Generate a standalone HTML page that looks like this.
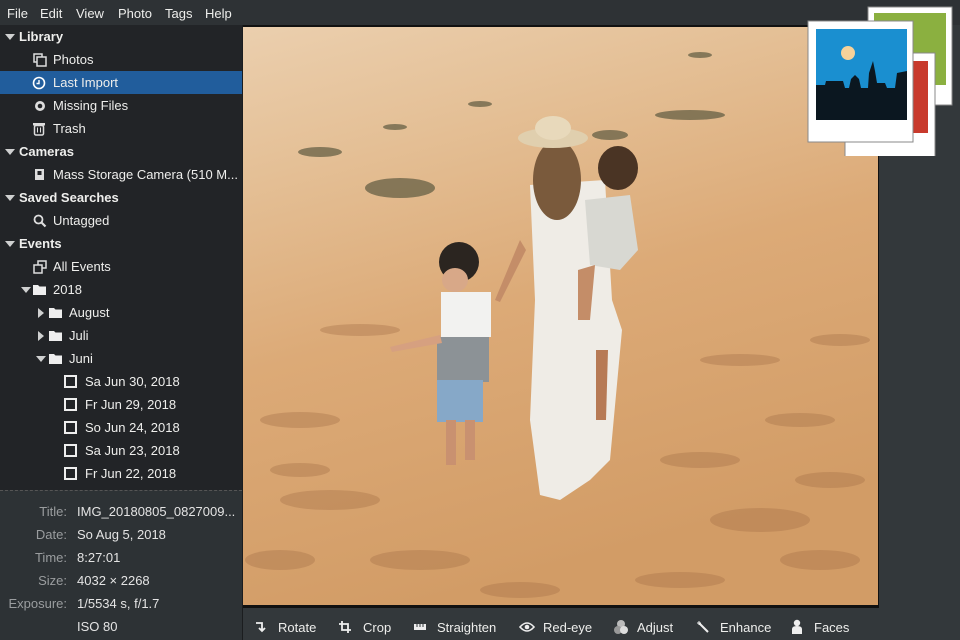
<!DOCTYPE html>
<html><head><meta charset="utf-8">
<style>
*{margin:0;padding:0;box-sizing:border-box}
body{width:960px;height:640px;overflow:hidden;background:#33383b;font-family:"Liberation Sans","DejaVu Sans",sans-serif;font-size:13px;color:#eeeeec;position:relative}
.menu{position:absolute;left:0;top:0;width:960px;height:25px;background:#2e3235;}
.menu span{position:absolute;top:6px;font-size:13px;color:#eeeeec}
.side{position:absolute;left:0;top:25px;width:242px;height:465px;background:#222427;}
.row{position:absolute;left:0;width:242px;height:23px;line-height:24px;white-space:nowrap}
.row.sel{background:#215d9c}
.hdr{font-weight:bold}
.tri{position:absolute;top:9px;width:0;height:0;border-left:5px solid transparent;border-right:5px solid transparent;border-top:6px solid #cfd0d0}
.trir{position:absolute;top:7px;width:0;height:0;border-top:5px solid transparent;border-bottom:5px solid transparent;border-left:6px solid #cfd0d0}
.ic{position:absolute;top:5px}
.info{position:absolute;left:0;top:490px;width:242px;height:150px;background:#2d3235;border-top:1px dashed #555}
.info .l{position:absolute;right:175px;color:#9a9d9f;text-align:right}
.info .v{position:absolute;left:77px;color:#e4e4e4}
.tb{position:absolute;top:620px;font-size:13px;color:#eeeeec}
.vline{position:absolute;left:242px;top:25px;width:1px;height:615px;background:#1b1d1f}
</style></head><body>
<div class="menu">
<span style="left:7px">File</span><span style="left:40px">Edit</span><span style="left:76px">View</span><span style="left:118px">Photo</span><span style="left:165px">Tags</span><span style="left:205px">Help</span>
</div>
<div class="side">
<div class="row hdr" style="top:0"><i class="tri" style="left:5px"></i><span style="position:absolute;left:19px">Library</span></div>
<div class="row" style="top:23px"><svg class="ic" style="left:33px" width="14" height="14" viewBox="0 0 14 14"><rect x="1" y="1" width="8" height="8" fill="none" stroke="#ddd" stroke-width="1.5"/><rect x="4" y="4" width="9" height="9" fill="#222427" stroke="#ddd" stroke-width="1.5"/></svg><span style="position:absolute;left:53px">Photos</span></div>
<div class="row sel" style="top:46px"><svg class="ic" style="left:32px" width="14" height="14" viewBox="0 0 14 14"><circle cx="7" cy="7" r="5.5" fill="none" stroke="#fff" stroke-width="1.6"/><path d="M7 4v3.5h-2.5" fill="none" stroke="#fff" stroke-width="1.4"/></svg><span style="position:absolute;left:53px">Last Import</span></div>
<div class="row" style="top:69px"><svg class="ic" style="left:33px" width="14" height="14" viewBox="0 0 14 14"><circle cx="7" cy="7" r="5" fill="#ddd"/><circle cx="7" cy="7" r="2.3" fill="#222427"/></svg><span style="position:absolute;left:53px">Missing Files</span></div>
<div class="row" style="top:92px"><svg class="ic" style="left:32px" width="14" height="14" viewBox="0 0 14 14"><rect x="1" y="1" width="12" height="2.5" fill="#ddd"/><rect x="2.5" y="3.5" width="9" height="9.5" rx="1.5" fill="none" stroke="#ddd" stroke-width="1.5"/><path d="M5.5 5.5v5M8.5 5.5v5" stroke="#ddd"/></svg><span style="position:absolute;left:53px">Trash</span></div>
<div class="row hdr" style="top:115px"><i class="tri" style="left:5px"></i><span style="position:absolute;left:19px">Cameras</span></div>
<div class="row" style="top:138px"><svg class="ic" style="left:34px" width="12" height="13" viewBox="0 0 12 13"><rect x="1" y="1" width="9" height="11" fill="#ddd"/><rect x="3.5" y="3" width="4" height="4" fill="#222427"/></svg><span style="position:absolute;left:53px">Mass Storage Camera (510 M...</span></div>
<div class="row hdr" style="top:161px"><i class="tri" style="left:5px"></i><span style="position:absolute;left:19px">Saved Searches</span></div>
<div class="row" style="top:184px"><svg class="ic" style="left:33px" width="14" height="14" viewBox="0 0 14 14"><circle cx="5.5" cy="5.5" r="4" fill="none" stroke="#ddd" stroke-width="1.8"/><path d="M8.5 8.5l4 4" stroke="#ddd" stroke-width="2.2"/></svg><span style="position:absolute;left:53px">Untagged</span></div>
<div class="row hdr" style="top:207px"><i class="tri" style="left:5px"></i><span style="position:absolute;left:19px">Events</span></div>
<div class="row" style="top:230px"><svg class="ic" style="left:33px" width="14" height="14" viewBox="0 0 14 14"><rect x="5" y="1" width="8" height="7" fill="none" stroke="#ddd" stroke-width="1.5"/><rect x="1" y="5" width="8" height="8" fill="#222427" stroke="#ddd" stroke-width="1.5"/></svg><span style="position:absolute;left:53px">All Events</span></div>
<div class="row" style="top:253px"><i class="tri" style="left:21px"></i><svg class="ic" style="left:32px" width="15" height="13" viewBox="0 0 15 13"><path d="M1 2h5l1.5 1.5H14V12H1z" fill="#eee"/></svg><span style="position:absolute;left:53px">2018</span></div>
<div class="row" style="top:276px"><i class="trir" style="left:38px"></i><svg class="ic" style="left:48px" width="15" height="13" viewBox="0 0 15 13"><path d="M1 2h5l1.5 1.5H14V12H1z" fill="#eee"/></svg><span style="position:absolute;left:69px">August</span></div>
<div class="row" style="top:299px"><i class="trir" style="left:38px"></i><svg class="ic" style="left:48px" width="15" height="13" viewBox="0 0 15 13"><path d="M1 2h5l1.5 1.5H14V12H1z" fill="#eee"/></svg><span style="position:absolute;left:69px">Juli</span></div>
<div class="row" style="top:322px"><i class="tri" style="left:36px"></i><svg class="ic" style="left:48px" width="15" height="13" viewBox="0 0 15 13"><path d="M1 2h5l1.5 1.5H14V12H1z" fill="#eee"/></svg><span style="position:absolute;left:69px">Juni</span></div>
<div class="row" style="top:345px"><svg class="ic" style="left:64px" width="13" height="13"><rect x="1" y="1" width="11" height="11" fill="none" stroke="#eee" stroke-width="2"/></svg><span style="position:absolute;left:85px">Sa Jun 30, 2018</span></div>
<div class="row" style="top:368px"><svg class="ic" style="left:64px" width="13" height="13"><rect x="1" y="1" width="11" height="11" fill="none" stroke="#eee" stroke-width="2"/></svg><span style="position:absolute;left:85px">Fr Jun 29, 2018</span></div>
<div class="row" style="top:391px"><svg class="ic" style="left:64px" width="13" height="13"><rect x="1" y="1" width="11" height="11" fill="none" stroke="#eee" stroke-width="2"/></svg><span style="position:absolute;left:85px">So Jun 24, 2018</span></div>
<div class="row" style="top:414px"><svg class="ic" style="left:64px" width="13" height="13"><rect x="1" y="1" width="11" height="11" fill="none" stroke="#eee" stroke-width="2"/></svg><span style="position:absolute;left:85px">Sa Jun 23, 2018</span></div>
<div class="row" style="top:437px"><svg class="ic" style="left:64px" width="13" height="13"><rect x="1" y="1" width="11" height="11" fill="none" stroke="#eee" stroke-width="2"/></svg><span style="position:absolute;left:85px">Fr Jun 22, 2018</span></div>
</div>
<div class="info">
<span class="l" style="top:13px;left:0;width:67px">Title:</span><span class="v" style="top:13px">IMG_20180805_0827009...</span>
<span class="l" style="top:36px;left:0;width:67px">Date:</span><span class="v" style="top:36px">So Aug 5, 2018</span>
<span class="l" style="top:59px;left:0;width:67px">Time:</span><span class="v" style="top:59px">8:27:01</span>
<span class="l" style="top:82px;left:0;width:67px">Size:</span><span class="v" style="top:82px">4032 × 2268</span>
<span class="l" style="top:105px;left:0;width:67px">Exposure:</span><span class="v" style="top:105px">1/5534 s, f/1.7</span>
<span class="v" style="top:128px">ISO 80</span>
</div>
<div class="vline"></div>

<svg style="position:absolute;left:0;top:0" width="960" height="640">
<defs>
<linearGradient id="sand" x1="0" y1="0" x2="0.3" y2="1">
<stop offset="0" stop-color="#ebcfae"/><stop offset="0.25" stop-color="#e4bf95"/><stop offset="0.55" stop-color="#dcaa77"/><stop offset="1" stop-color="#d29c66"/>
</linearGradient>
</defs>
<rect x="243" y="25" width="636" height="583" fill="#111"/>
<rect x="243" y="27" width="635" height="578" fill="url(#sand)"/>
<g fill="#a8744a" opacity="0.4">
<ellipse cx="300" cy="420" rx="40" ry="8"/><ellipse cx="330" cy="500" rx="50" ry="10"/><ellipse cx="280" cy="560" rx="35" ry="10"/>
<ellipse cx="420" cy="560" rx="50" ry="10"/><ellipse cx="700" cy="460" rx="40" ry="8"/><ellipse cx="760" cy="520" rx="50" ry="12"/>
<ellipse cx="820" cy="560" rx="40" ry="10"/><ellipse cx="680" cy="580" rx="45" ry="8"/><ellipse cx="800" cy="420" rx="35" ry="7"/>
<ellipse cx="360" cy="330" rx="40" ry="6"/><ellipse cx="740" cy="360" rx="40" ry="6"/><ellipse cx="520" cy="590" rx="40" ry="8"/>
<ellipse cx="840" cy="340" rx="30" ry="6"/><ellipse cx="300" cy="470" rx="30" ry="7"/><ellipse cx="830" cy="480" rx="35" ry="8"/>
</g>
<g fill="#5e5a40" opacity="0.7">
<ellipse cx="400" cy="188" rx="35" ry="10"/><ellipse cx="320" cy="152" rx="22" ry="5"/><ellipse cx="690" cy="115" rx="35" ry="5"/>
<ellipse cx="610" cy="135" rx="18" ry="5"/><ellipse cx="480" cy="104" rx="12" ry="3"/><ellipse cx="395" cy="127" rx="12" ry="3"/><ellipse cx="700" cy="55" rx="12" ry="3"/>
</g>
<path d="M530 185 L605 180 L612 300 L622 330 L610 460 L590 480 L560 500 L540 495 L530 420 L535 300 Z" fill="#efece6"/>
<ellipse cx="557" cy="180" rx="24" ry="40" fill="#7a5a3c"/>
<ellipse cx="553" cy="138" rx="35" ry="10" fill="#e0cfae"/>
<ellipse cx="553" cy="128" rx="18" ry="12" fill="#e8d9bb"/>
<path d="M596 350 L608 350 L606 420 L596 420Z" fill="#b77a55"/>
<ellipse cx="618" cy="168" rx="20" ry="22" fill="#4a3424"/>
<path d="M585 200 L630 195 L638 250 L620 270 L590 265Z" fill="#d8d8d2"/>
<path d="M578 270 L595 265 L590 320 L578 320Z" fill="#c48d68"/>
<ellipse cx="459" cy="262" rx="20" ry="20" fill="#2b2520"/>
<ellipse cx="455" cy="280" rx="13" ry="12" fill="#d8a888"/>
<rect x="441" y="292" width="50" height="45" fill="#f2f2f0"/>
<rect x="437" y="337" width="52" height="45" fill="#8c9296"/>
<rect x="437" y="380" width="46" height="42" fill="#86a8c8"/>
<rect x="446" y="420" width="10" height="45" fill="#c99170"/><rect x="465" y="420" width="10" height="40" fill="#c99170"/>
<path d="M440 335 L390 347 L392 352 L442 343Z" fill="#d6a080"/>
<path d="M520 240 L495 300 L500 302 L526 250Z" fill="#c48d68"/>
</svg>

<svg style="position:absolute;left:805px;top:3px" width="152" height="153" viewBox="0 0 152 153">
<rect x="63" y="4" width="84" height="98" fill="#fff" stroke="#888"/>
<rect x="69" y="10" width="72" height="72" fill="#8bb040"/>
<rect x="40" y="50" width="90" height="104" fill="#fff" stroke="#888"/>
<rect x="95" y="58" width="28" height="72" fill="#c83a2c"/>
<rect x="3" y="18" width="105" height="121" fill="#fff" stroke="#888"/>
<rect x="11" y="26" width="91" height="91" fill="#1a8fd0"/>
<circle cx="43" cy="50" r="7" fill="#f6d29a"/>
<path d="M11 82 L20 82 L21 78 L38 78 L40 85 L44 85 L46 76 L50 72 L54 76 L56 85 L63 85 L64 70 L68 58 L70 68 L72 80 L80 80 L82 85 L90 85 L92 70 L102 68 L102 117 L11 117Z" fill="#0b1720"/>
</svg>

<svg style="position:absolute;left:254px;top:620px" width="14" height="14"><path d="M2 3h6v7M5 8l3 3 3-3" fill="none" stroke="#eee" stroke-width="1.8"/></svg>
<span class="tb" style="left:278px">Rotate</span>
<svg style="position:absolute;left:338px;top:620px" width="14" height="14"><path d="M4 1v9h9M1 4h9v9" fill="none" stroke="#eee" stroke-width="1.8"/></svg>
<span class="tb" style="left:363px">Crop</span>
<svg style="position:absolute;left:413px;top:621px" width="14" height="12"><rect x="1" y="3" width="12" height="6" fill="#eee"/><path d="M4 3v3M7 3v3M10 3v3" stroke="#33383b"/></svg>
<span class="tb" style="left:437px">Straighten</span>
<svg style="position:absolute;left:519px;top:620px" width="16" height="14"><path d="M1 7q7-8 14 0q-7 8-14 0z" fill="none" stroke="#eee" stroke-width="1.6"/><circle cx="8" cy="7" r="2.3" fill="#eee"/></svg>
<span class="tb" style="left:543px">Red-eye</span>
<svg style="position:absolute;left:613px;top:619px" width="16" height="16"><circle cx="8" cy="5" r="4" fill="#bbb"/><circle cx="5" cy="11" r="4" fill="#999"/><circle cx="11" cy="11" r="4" fill="#ddd"/></svg>
<span class="tb" style="left:637px">Adjust</span>
<svg style="position:absolute;left:696px;top:620px" width="14" height="14"><path d="M3 3l9 9" stroke="#eee" stroke-width="2"/><path d="M1 3h4M3 1v4" stroke="#eee"/></svg>
<span class="tb" style="left:720px">Enhance</span>
<svg style="position:absolute;left:790px;top:619px" width="14" height="16"><circle cx="7" cy="4" r="3.2" fill="#eee"/><path d="M2 15v-5q0-3 5-3t5 3v5z" fill="#eee"/></svg>
<span class="tb" style="left:814px">Faces</span>
</body></html>
